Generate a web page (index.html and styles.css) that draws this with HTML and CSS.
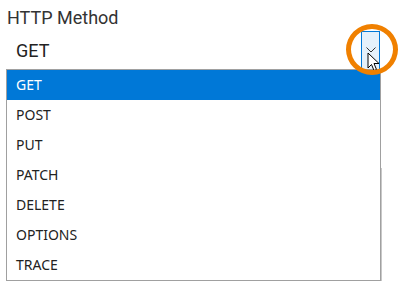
FILE: index.html
```
<!DOCTYPE html>
<html>
<head>
<meta charset="utf-8">
<link rel="stylesheet" href="styles.css">
</head>
<body>
<div class="field">
  <div class="label">HTTP Method</div>
  <div class="select">
    <span class="value">GET</span>
    <span class="btn">
      <svg width="10" height="6" viewBox="0 0 10 6"><path d="M0.5 0.5 L5 5 L9.5 0.5" fill="none" stroke="#333" stroke-width="1"/></svg>
    </span>
  </div>
  <div class="behind"></div>
  <ul class="list">
    <li class="sel">GET</li>
    <li>POST</li>
    <li>PUT</li>
    <li>PATCH</li>
    <li>DELETE</li>
    <li>OPTIONS</li>
    <li>TRACE</li>
  </ul>
  <svg class="cursor" width="14" height="21" viewBox="0 0 14 21"><path d="M1 1 L1 16 L4.5 12.5 L7 18.5 L9.5 17.5 L7 11.5 L12 11.5 Z" fill="#fff" stroke="#000" stroke-width="1" stroke-linejoin="miter"/></svg>
  <div class="ring"></div>
</div>
</body>
</html>
```
FILE: styles.css
```
html, body { margin: 0; padding: 0; background: #fff; }
body { width: 400px; height: 281px; overflow: hidden; position: relative; }
.field { position: relative; padding: 6px 0 0 7px; height: 275px; }
.label { font-family: Roboto, "Liberation Sans", sans-serif; font-size: 18px; color: #333; line-height: 24px; }
.select { display: flex; align-items: stretch; height: 39px; margin-top: 1px; width: 373px; }
.value { flex: 1; font-family: Roboto, "Liberation Sans", sans-serif; font-size: 18px; color: #222; padding-left: 9px; line-height: 40px; }
.btn { width: 19px; border: 1px solid #0078d7; background: #e5f1fb; display: flex; justify-content: center; align-items: center; box-sizing: border-box; }
.btn svg { margin-top: -2px; }
.list { position: absolute; left: 6px; top: 69px; width: 373px; margin: 0; padding: 0; list-style: none; border: 1px solid #a0a0a0; background: #fff; font-family: "Noto Sans", "Open Sans", sans-serif; font-size: 14px; color: #222; }
.list li { height: 30px; line-height: 30px; padding-left: 9px; }
.list li.sel { background: #0078d7; color: #fff; }
.behind { position: absolute; left: 40px; top: 168px; width: 341px; height: 120px; border-top: 1px solid #c8c8c8; border-right: 1px solid #c8c8c8; }
.ring { position: absolute; left: 346px; top: 24px; width: 42px; height: 41px; border: 5px solid #f08000; border-radius: 50%; }
.cursor { position: absolute; left: 367px; top: 52px; }
```
